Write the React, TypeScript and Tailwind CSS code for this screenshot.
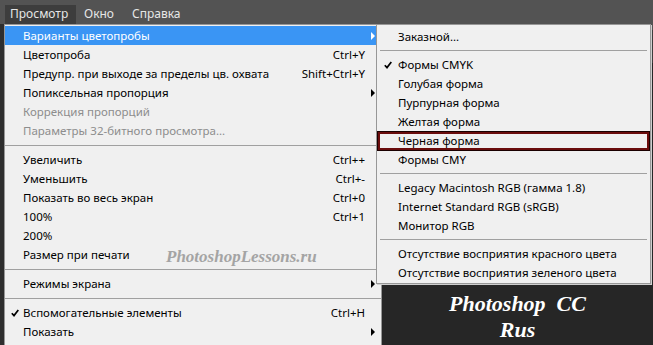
type Item =
  | { sep: true }
  | {
      sep?: false
      label: string
      shortcut?: string
      sub?: boolean
      checked?: boolean
      disabled?: boolean
      active?: boolean
      boxed?: boolean
    }

const MAIN: Item[] = [
  { label: 'Варианты цветопробы', sub: true, active: true },
  { label: 'Цветопроба', shortcut: 'Ctrl+Y' },
  { label: 'Предупр. при выходе за пределы цв. охвата', shortcut: 'Shift+Ctrl+Y' },
  { label: 'Попиксельная пропорция', sub: true },
  { label: 'Коррекция пропорций', disabled: true },
  { label: 'Параметры 32-битного просмотра...', disabled: true },
  { sep: true },
  { label: 'Увеличить', shortcut: 'Ctrl++' },
  { label: 'Уменьшить', shortcut: 'Ctrl+-' },
  { label: 'Показать во весь экран', shortcut: 'Ctrl+0' },
  { label: '100%', shortcut: 'Ctrl+1' },
  { label: '200%' },
  { label: 'Размер при печати' },
  { sep: true },
  { label: 'Режимы экрана', sub: true },
  { sep: true },
  { label: 'Вспомогательные элементы', shortcut: 'Ctrl+H', checked: true },
  { label: 'Показать', sub: true },
  { sep: true },
]

const PROOF: Item[] = [
  { label: 'Заказной...' },
  { sep: true },
  { label: 'Формы CMYK', checked: true },
  { label: 'Голубая форма' },
  { label: 'Пурпурная форма' },
  { label: 'Желтая форма' },
  { label: 'Черная форма', boxed: true },
  { label: 'Формы CMY' },
  { sep: true },
  { label: 'Legacy Macintosh RGB (гамма 1.8)' },
  { label: 'Internet Standard RGB (sRGB)' },
  { label: 'Монитор RGB' },
  { sep: true },
  { label: 'Отсутствие восприятия красного цвета' },
  { label: 'Отсутствие восприятия зеленого цвета' },
]

const font = { fontFamily: '"Noto Sans", "Open Sans", sans-serif' }

function Check({ color = '#000' }: { color?: string }) {
  return (
    <svg width="8" height="8" viewBox="0 0 8 8">
      <path d="M0.8 4.2 L3 6.6 L7.3 1" fill="none" stroke={color} strokeWidth="1.7" />
    </svg>
  )
}

function Arrow({ color }: { color: string }) {
  return (
    <svg width="4" height="8" viewBox="0 0 4 8">
      <path d="M0 0 L4 4 L0 8 Z" fill={color} />
    </svg>
  )
}

function MainMenu() {
  return (
    <div className="w-[378px] border border-[#979797] bg-[#f0f0f0] pt-px">
      {MAIN.map((it, i) => {
        if (it.sep) {
          return (
            <div key={i} className="flex h-[10px] items-center">
              <div className="h-px w-full bg-[#a0a0a0]" />
            </div>
          )
        }
        const fg = it.active ? 'text-white' : it.disabled ? 'text-[#8d8d8d]' : 'text-black'
        return (
          <div
            key={i}
            className={`flex h-[19px] items-center text-[11.5px] ${fg} ${it.active ? 'bg-[#3a95f4]' : ''}`}
          >
            <span className="flex w-[18px] justify-center pl-[2px]">{it.checked && <Check />}</span>
            <span className="flex-1 whitespace-nowrap">{it.label}</span>
            {it.shortcut && <span className="whitespace-nowrap">{it.shortcut}</span>}
            <span className="flex w-[16px] justify-start pl-[6px]">
              {it.sub && <Arrow color={it.active ? '#fff' : '#000'} />}
            </span>
          </div>
        )
      })}
    </div>
  )
}

function ProofMenu() {
  return (
    <div className="absolute left-[376px] top-[24px] w-[275px] border border-[#979797] bg-[#f0f0f0] pb-px pt-[2px] shadow-[1px_1px_0_#cfcfcf]">
      {PROOF.map((it, i) => {
        if (it.sep) {
          return (
            <div key={i} className="flex h-[9px] items-center pl-[3px] pr-[3px]">
              <div className="h-px w-full bg-[#a0a0a0]" />
            </div>
          )
        }
        return (
          <div key={i} className="flex h-[19px] items-center px-px">
            <div
              className={`flex h-[18px] flex-1 items-center text-[11.5px] text-black ${
                it.boxed ? 'border-2 border-[#6a0c0c] shadow-[0_0_0_1px_#1a0000]' : ''
              }`}
            >
              <span className={`flex justify-center ${it.boxed ? 'w-[18px]' : 'w-[20px]'}`}>
                {it.checked && <Check />}
              </span>
              <span className="whitespace-nowrap">{it.label}</span>
            </div>
          </div>
        )
      })}
    </div>
  )
}

export default function App() {
  return (
    <div className="relative flex h-[345px] w-[653px] flex-col overflow-hidden bg-[#262626]" style={font}>
      <div className="flex h-[24px] shrink-0 items-center bg-[#535353] text-[12px] text-[#e6e6e6]">
        <span className="ml-[5px] mt-[4px] flex h-[19px] w-[71px] items-center bg-[#3d3d3d] pl-[5px]">Просмотр</span>
        <span className="ml-[8px] mt-[4px]">Окно</span>
        <span className="ml-[18px] mt-[4px]">Справка</span>
      </div>

      <div className="flex min-h-0 flex-1">
        <div className="w-[4px] bg-[#2e2e2e]" />
        <div className="relative">
          <MainMenu />
          <span
            className="absolute left-[162px] top-[220px] text-[17px] font-bold italic text-[#a4a4a4]"
            style={{ fontFamily: '"Liberation Serif", serif' }}
          >
            PhotoshopLessons.ru
          </span>
        </div>
        <div className="flex flex-1 flex-col">
          <div className="h-[6px] bg-[#535353]" />
          <div className="h-[33px] bg-[#3c3c3c]" />
          <div className="flex-1" />
          <div
            className="flex flex-col items-center pb-[2px] text-[22px] font-bold italic leading-[26px] text-white"
            style={{ fontFamily: '"Liberation Serif", serif' }}
          >
            <span>Photoshop&nbsp;&nbsp;CC</span>
            <span>Rus</span>
          </div>
        </div>
      </div>

      <ProofMenu />
    </div>
  )
}
